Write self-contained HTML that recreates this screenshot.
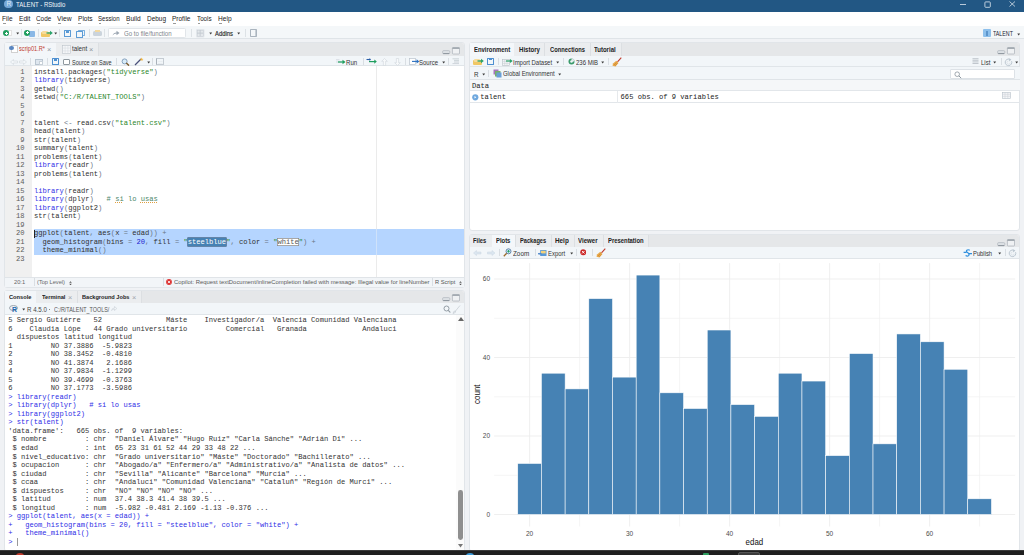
<!DOCTYPE html>
<html><head><meta charset="utf-8"><style>
*{box-sizing:border-box;margin:0;padding:0}
html,body{width:1024px;height:555px;overflow:hidden;background:#f0f2f5;font-family:"Liberation Sans",sans-serif;color:#222}
.a{position:absolute}
.t{position:absolute;white-space:pre;line-height:1;transform-origin:0 0}
.pane{position:absolute;background:#fff;border:1px solid #e1e5e9;border-radius:3px;overflow:hidden}
.tabs{position:absolute;left:0;top:0;right:0;background:#e5e7e9}
.ptb{position:absolute;left:0;right:0;background:#f2f6f9;border-bottom:0.8px solid #e0e5e9}
.mono{font-family:"Liberation Mono",monospace}
.ln{height:8.5px;line-height:8.5px;font-size:7.125px;white-space:pre}
.k{color:#2f2fe6}.s{color:#2a862a}.o{color:#6a7585}.n{color:#1d1dd0}.c{color:#4c886b}.p{color:#2e2ee6}
.c u{text-decoration:underline dotted #e0a040}
.sb{background:#4682b4;color:#fff;box-shadow:0 0 0 0.6px #2d4f6e}
.wh{display:inline-block;height:8.5px;vertical-align:top;background:#fff;color:#555;box-shadow:inset 0 0 0 0.7px #8a8a8a}
</style></head><body>
<div class="a" style="left:0px;top:0px;width:1024px;height:12px;background:#225784"></div>
<div class="a" style="left:4.1px;top:-0.3px;width:8.6px;height:8.6px;border-radius:50%;background:#75a8d8"></div>
<div class="t" style="left:6.5px;top:0.9px;font-size:6.6px;color:#dde9f5">R</div>
<div class="t" style="left:15.75px;top:0.59px;font-size:7.0px;color:#f2f6fa;transform:scaleX(0.862);">TALENT - RStudio</div>
<div class="a" style="left:960.4px;top:3.9px;width:5.8px;height:0.7px;background:#b9c9d9"></div>
<svg class="a" style="left:984px;top:1px" width="7" height="7" viewBox="0 0 7 7"><rect x="0.9" y="0.9" width="5.4" height="5.4" rx="0.8" fill="none" stroke="#eef3f8" stroke-width="0.75"/></svg>
<svg class="a" style="left:1009px;top:1px" width="6.5" height="6" viewBox="0 0 6.5 6"><path d="M0.5 0.5L6 5.5M6 0.5L0.5 5.5" stroke="#eef3f8" stroke-width="0.7"/></svg>
<div class="a" style="left:0px;top:12px;width:1024px;height:14px;background:#fff"></div>
<div class="t" style="left:2.44px;top:15.97px;font-size:7.1px;color:#222;transform:scaleX(0.921);">File</div>
<div class="a" style="left:3.0999999999999996px;top:22.6px;width:2.8px;height:0.5px;background:#999"></div>
<div class="t" style="left:18.64px;top:15.97px;font-size:7.1px;color:#222;transform:scaleX(0.935);">Edit</div>
<div class="a" style="left:19.3px;top:22.6px;width:2.8px;height:0.5px;background:#999"></div>
<div class="t" style="left:36.45px;top:15.97px;font-size:7.1px;color:#222;transform:scaleX(0.898);">Code</div>
<div class="a" style="left:37.099999999999994px;top:22.6px;width:2.8px;height:0.5px;background:#999"></div>
<div class="t" style="left:57.45px;top:15.97px;font-size:7.1px;color:#222;transform:scaleX(0.953);">View</div>
<div class="a" style="left:58.099999999999994px;top:22.6px;width:2.8px;height:0.5px;background:#999"></div>
<div class="t" style="left:77.64px;top:15.97px;font-size:7.1px;color:#222;transform:scaleX(0.928);">Plots</div>
<div class="a" style="left:78.3px;top:22.6px;width:2.8px;height:0.5px;background:#999"></div>
<div class="t" style="left:98.05px;top:15.97px;font-size:7.1px;color:#222;transform:scaleX(0.853);">Session</div>
<div class="a" style="left:98.7px;top:22.6px;width:2.8px;height:0.5px;background:#999"></div>
<div class="t" style="left:125.94px;top:15.97px;font-size:7.1px;color:#222;transform:scaleX(0.928);">Build</div>
<div class="a" style="left:126.6px;top:22.6px;width:2.8px;height:0.5px;background:#999"></div>
<div class="t" style="left:146.95px;top:15.97px;font-size:7.1px;color:#222;transform:scaleX(0.911);">Debug</div>
<div class="a" style="left:147.60000000000002px;top:22.6px;width:2.8px;height:0.5px;background:#999"></div>
<div class="t" style="left:172.34px;top:15.97px;font-size:7.1px;color:#222;transform:scaleX(0.917);">Profile</div>
<div class="a" style="left:173.0px;top:22.6px;width:2.8px;height:0.5px;background:#999"></div>
<div class="t" style="left:197.05px;top:15.97px;font-size:7.1px;color:#222;transform:scaleX(0.884);">Tools</div>
<div class="a" style="left:197.70000000000002px;top:22.6px;width:2.8px;height:0.5px;background:#999"></div>
<div class="t" style="left:218.45px;top:15.97px;font-size:7.1px;color:#222;transform:scaleX(0.928);">Help</div>
<div class="a" style="left:219.10000000000002px;top:22.6px;width:2.8px;height:0.5px;background:#999"></div>
<div class="a" style="left:0px;top:26px;width:1024px;height:12.5px;background:#f4f7f9;border-bottom:0.8px solid #dfe4e8"></div>
<div class="a" style="left:7.8px;top:30px;width:4px;height:5.5px;background:#fff;border:0.5px solid #e2e2e2"></div>
<div class="a" style="left:3px;top:30.3px;width:6.2px;height:6.2px;border-radius:50%;background:#1e9e5e"></div>
<div class="a" style="left:4.5px;top:33px;width:3.2px;height:0.9px;background:#fff"></div>
<div class="a" style="left:5.65px;top:31.85px;width:0.9px;height:3.2px;background:#fff"></div>
<svg class="a" style="left:16px;top:31.799999999999997px" width="4" height="3" viewBox="0 0 4 3"><path d="M0.3 0.6H3.1L1.7 2.4Z" fill="#3a3a3a"/></svg>
<div class="a" style="left:21px;top:29px;width:0.7px;height:8px;background:#dde2e6"></div>
<div class="a" style="left:28.5px;top:30.5px;width:6.5px;height:6.5px;background:#8ab8e6;border-radius:1px"></div>
<div class="a" style="left:24.3px;top:29.7px;width:6.2px;height:6.2px;border-radius:50%;background:#1e9e5e"></div>
<div class="a" style="left:25.8px;top:32.4px;width:3.2px;height:0.9px;background:#fff"></div>
<div class="a" style="left:26.95px;top:31.25px;width:0.9px;height:3.2px;background:#fff"></div>
<div class="a" style="left:37.5px;top:29px;width:0.7px;height:8px;background:#dde2e6"></div>
<div class="a" style="left:41px;top:32px;width:9px;height:4.5px;background:#f0c865;border-radius:1px"></div>
<div class="a" style="left:41.5px;top:30.5px;width:6px;height:3px;background:#f7dc9a;border-radius:1px"></div>
<svg class="a" style="left:46px;top:30px" width="7" height="5" viewBox="0 0 7 5"><path d="M0.5 3H4.5" stroke="#2aa36b" stroke-width="1.3"/><path d="M4 0.8L6.8 3L4 5.2Z" fill="#2aa36b"/></svg>
<svg class="a" style="left:54px;top:31.799999999999997px" width="4" height="3" viewBox="0 0 4 3"><path d="M0.3 0.6H3.1L1.7 2.4Z" fill="#3a3a3a"/></svg>
<div class="a" style="left:58.6px;top:29px;width:0.7px;height:8px;background:#dde2e6"></div>
<div class="a" style="left:64px;top:30px;width:7px;height:7px;border:1.3px solid #5b9bd5;border-radius:0.5px"></div>
<div class="a" style="left:66px;top:30px;width:3px;height:2.5px;background:#5b9bd5"></div>
<div class="a" style="left:78px;top:29.5px;width:6.5px;height:6.5px;border:1.2px solid #7ab0e0;border-radius:0.5px"></div>
<div class="a" style="left:76px;top:31px;width:6.5px;height:6.5px;border:1.2px solid #5b9bd5;border-radius:0.5px;background:#f4f7f9"></div>
<div class="a" style="left:88.5px;top:29px;width:0.7px;height:8px;background:#dde2e6"></div>
<div class="a" style="left:92.6px;top:31px;width:9px;height:5px;background:#cbd4dc;border-radius:1.5px"></div>
<div class="a" style="left:94.5px;top:29.5px;width:5px;height:2.5px;background:#f3d9a0"></div>
<div class="a" style="left:104.3px;top:29px;width:0.7px;height:8px;background:#dde2e6"></div>
<div class="a" style="left:108.4px;top:27.5px;width:78px;height:10px;background:#fff;border:0.7px solid #e1e5e9;border-radius:1.5px"></div>
<svg class="a" style="left:112px;top:30px" width="8" height="6" viewBox="0 0 8 6"><path d="M0.5 5.5 Q1.5 2.5 4.5 2.5 L4.5 0.8 L7.5 3 L4.5 5.2 L4.5 3.6 Q2 3.6 0.5 5.5Z" fill="#9aa5b1"/></svg>
<div class="t" style="left:123.67px;top:31.14px;font-size:6.6px;color:#80868c;transform:scaleX(0.927);">Go to file/function</div>
<div class="a" style="left:190.5px;top:29px;width:0.7px;height:8px;background:#dde2e6"></div>
<svg class="a" style="left:196px;top:29px" width="8.5" height="8.5" viewBox="0 0 8.5 8.5"><rect x="0" y="0" width="8.5" height="8.5" rx="1" fill="#e4e8ec"/><rect x="1.2" y="1.2" width="2.7" height="2.7" fill="none" stroke="#c3cad1" stroke-width="0.5"/><rect x="4.6" y="1.2" width="2.7" height="2.7" fill="none" stroke="#c3cad1" stroke-width="0.5"/><rect x="1.2" y="4.6" width="2.7" height="2.7" fill="none" stroke="#c3cad1" stroke-width="0.5"/><rect x="4.6" y="4.6" width="2.7" height="2.7" fill="none" stroke="#c3cad1" stroke-width="0.5"/></svg>
<svg class="a" style="left:208.5px;top:31.799999999999997px" width="4" height="3" viewBox="0 0 4 3"><path d="M0.3 0.6H3.1L1.7 2.4Z" fill="#3a3a3a"/></svg>
<div class="t" style="left:215.37px;top:31.34px;font-size:6.6px;color:#2a2a2a;transform:scaleX(0.887);-webkit-text-stroke:0.15px #2a2a2a">Addins</div>
<svg class="a" style="left:237px;top:31.799999999999997px" width="4" height="3" viewBox="0 0 4 3"><path d="M0.3 0.6H3.1L1.7 2.4Z" fill="#3a3a3a"/></svg>
<div class="a" style="left:245px;top:29px;width:0.7px;height:8px;background:#dde2e6"></div>
<div class="a" style="left:249.5px;top:29.3px;width:7px;height:8px;border:0.7px solid #aab4be;border-radius:0.8px;background:linear-gradient(#aab4be,#aab4be) 4px 0/0.6px 100% no-repeat"></div>
<div class="a" style="left:983px;top:29.3px;width:8px;height:7.5px;background:#8dc0ec;border-radius:1px"></div>
<div class="a" style="left:986px;top:30.5px;width:2px;height:5px;background:#5c95cc"></div>
<div class="t" style="left:993.38px;top:31.05px;font-size:6.5px;color:#223;transform:scaleX(0.813);">TALENT</div>
<svg class="a" style="left:1016.5px;top:32.8px" width="4" height="3" viewBox="0 0 4 3"><path d="M0.3 0.6H3.1L1.7 2.4Z" fill="#3a3a3a"/></svg>
<div class="pane" style="left:4px;top:42px;width:461px;height:246px"><div class="tabs" style="height:12.8px"></div><div class="ptb" style="top:12.8px;height:10.5px"></div></div>
<div class="a" style="left:56px;top:43.3px;width:43px;height:12.5px;background:#ebedef;border-right:0.7px solid #dcdfe2"></div>
<div class="a" style="left:5px;top:43px;width:51px;height:13px;background:#f3f6f9"></div>
<div class="a" style="left:10.5px;top:45px;width:7px;height:7.6px;background:#fff;border:0.6px solid #d0d0d0"></div>
<div class="a" style="left:9.4px;top:45.5px;width:4.5px;height:4.3px;border-radius:50%;background:#5a86c0"></div>
<div class="t" style="left:19.28px;top:46.45px;font-size:6.5px;color:#c0392b;transform:scaleX(0.867);">scrip01.R*</div>
<div class="t" style="left:47.12px;top:45.91px;font-size:7.6px;color:#8d9399;transform:scaleX(0.965);">×</div>
<svg class="a" style="left:61.7px;top:45px" width="9" height="9" viewBox="0 0 9 9"><rect x="0.4" y="0.4" width="8.2" height="8.2" fill="#f5f7f9" stroke="#bcc3ca" stroke-width="0.6"/><path d="M0.4 3.1H8.6M0.4 5.9H8.6M3.1 0.4V8.6M5.9 0.4V8.6" stroke="#d3d8dd" stroke-width="0.5"/></svg>
<div class="t" style="left:71.58px;top:46.45px;font-size:6.5px;color:#333;transform:scaleX(0.955);">talent</div>
<div class="t" style="left:88.62px;top:45.91px;font-size:7.6px;color:#8d9399;transform:scaleX(0.965);">×</div>
<svg class="a" style="left:442px;top:46.5px" width="18" height="8" viewBox="0 0 18 8"><rect x="0.6" y="3.6" width="7.2" height="3.2" rx="1.1" fill="#dde1e5" stroke="#a7afb7" stroke-width="0.6"/><path d="M1.2 6.5H7.2" stroke="#8a939b" stroke-width="0.9"/><rect x="10.4" y="0.6" width="7.1" height="6.4" rx="0.8" fill="#eff1f3" stroke="#9ea6ae" stroke-width="0.6"/><rect x="10.4" y="0.5" width="7.1" height="1.3" fill="#939ba3"/></svg>
<svg class="a" style="left:9.5px;top:59px" width="17" height="6" viewBox="0 0 17 6"><path d="M0.5 3L3.5 0.5V2H7.5V4H3.5V5.5Z M16.5 3L13.5 0.5V2H9.5V4H13.5V5.5Z" fill="#f4f7fa" stroke="#d0d6dc" stroke-width="0.6"/></svg>
<div class="a" style="left:30.2px;top:57.5px;width:0.7px;height:7px;background:#d9dee3"></div>
<div class="a" style="left:35px;top:58.5px;width:7.5px;height:6px;background:#dfe7ef;border:0.6px solid #b8c4d0"></div>
<div class="a" style="left:38.5px;top:60.5px;width:4px;height:4px;background:#fff;border:0.5px solid #c7d0d8"></div>
<div class="a" style="left:47.3px;top:57.5px;width:0.7px;height:7px;background:#d9dee3"></div>
<div class="a" style="left:52.2px;top:58.3px;width:6.8px;height:6.8px;border:1.3px solid #4d8fd1;border-radius:0.6px"></div>
<div class="a" style="left:54px;top:58.3px;width:3.2px;height:2.3px;background:#4d8fd1"></div>
<div class="a" style="left:63.3px;top:59.2px;width:6.6px;height:6.2px;background:#fff;border:0.6px solid #8f989f;border-radius:1px"></div>
<div class="t" style="left:71.67px;top:59.64px;font-size:6.6px;color:#333;transform:scaleX(0.844);">Source on Save</div>
<div class="a" style="left:116px;top:57.5px;width:0.7px;height:7px;background:#d9dee3"></div>
<svg class="a" style="left:121px;top:57.5px" width="9" height="8" viewBox="0 0 9 8"><circle cx="3.6" cy="3.4" r="2.5" fill="#d8ecf8" stroke="#7c98b8" stroke-width="0.9"/><path d="M5.3 5.1L8 7.6" stroke="#7a5a2a" stroke-width="1.4"/></svg>
<svg class="a" style="left:134px;top:57px" width="10" height="9" viewBox="0 0 10 9"><path d="M1 8L7 2" stroke="#4a4f7a" stroke-width="1.3"/><path d="M7.5 0.5L8 1.8L9.5 2L8.3 2.8L8.6 4L7.5 3.2L6.5 4L6.8 2.8L5.6 2L7 1.8Z" fill="#f0b43c"/></svg>
<svg class="a" style="left:146.5px;top:60.5px" width="4" height="3" viewBox="0 0 4 3"><path d="M0.3 0.6H3.1L1.7 2.4Z" fill="#3a3a3a"/></svg>
<div class="a" style="left:152px;top:57.5px;width:0.7px;height:7px;background:#d9dee3"></div>
<div class="a" style="left:156.4px;top:58.2px;width:7.2px;height:6.4px;border:0.6px solid #c5ccd3;border-left:1.3px solid #a9b1b9;background:linear-gradient(#dfe5ea,#dfe5ea) 1px 2px/4.5px 0.5px no-repeat,linear-gradient(#dfe5ea,#dfe5ea) 1px 4px/4.5px 0.5px no-repeat"></div>
<svg class="a" style="left:336px;top:58.5px" width="10" height="6" viewBox="0 0 10 6"><path d="M0 0.8H3.5M0 3H6" stroke="#c8d0d8" stroke-width="0.7"/><path d="M2 3H7" stroke="#1e9e5e" stroke-width="1.2"/><path d="M6.5 0.8L9.5 3L6.5 5.2Z" fill="#1e9e5e"/></svg>
<div class="t" style="left:345.97px;top:59.64px;font-size:6.6px;color:#333;transform:scaleX(0.924);">Run</div>
<div class="a" style="left:362.5px;top:57.5px;width:0.7px;height:7px;background:#d9dee3"></div>
<svg class="a" style="left:366px;top:58px" width="11" height="6" viewBox="0 0 11 6"><path d="M0.5 1.5H4" stroke="#2a5fa8" stroke-width="1.1"/><path d="M3.5 0L5 1.5L3.5 3Z" fill="#2a5fa8"/><path d="M3 3.6H9" stroke="#1e9e5e" stroke-width="1.2"/><path d="M8.3 1.5L10.8 3.6L8.3 5.7Z" fill="#1e9e5e"/></svg>
<svg class="a" style="left:380.5px;top:57.8px" width="7" height="8" viewBox="0 0 7 8"><path d="M3.5 0.5L6.3 3.3H4.6V7.5H2.4V3.3H0.7Z" fill="#f8fafb" stroke="#cfd5db" stroke-width="0.6"/></svg>
<svg class="a" style="left:393.5px;top:57.8px" width="7" height="8" viewBox="0 0 7 8"><path d="M3.5 7.5L6.3 4.7H4.6V0.5H2.4V4.7H0.7Z" fill="#f8fafb" stroke="#cfd5db" stroke-width="0.6"/></svg>
<div class="a" style="left:404.7px;top:57.5px;width:0.7px;height:7px;background:#d9dee3"></div>
<svg class="a" style="left:408.5px;top:58px" width="11" height="7" viewBox="0 0 11 7"><rect x="0.4" y="0.4" width="6" height="6" fill="#fff" stroke="#b9c3cc" stroke-width="0.7"/><path d="M3 3.4H8" stroke="#2a6fc0" stroke-width="1.1"/><path d="M7.6 1.3L10.3 3.4L7.6 5.5Z" fill="#2a6fc0"/></svg>
<div class="t" style="left:418.67px;top:59.64px;font-size:6.6px;color:#333;transform:scaleX(0.913);">Source</div>
<svg class="a" style="left:441.8px;top:60.5px" width="4" height="3" viewBox="0 0 4 3"><path d="M0.3 0.6H3.1L1.7 2.4Z" fill="#3a3a3a"/></svg>
<div class="a" style="left:447.5px;top:57.5px;width:0.7px;height:7px;background:#d9dee3"></div>
<svg class="a" style="left:452px;top:58px" width="8" height="7" viewBox="0 0 8 7"><path d="M0.5 0.8H7M2 2.4H7M2 4H7M0.5 5.6H7" stroke="#c3cad1" stroke-width="0.8"/></svg>
<div class="a" style="left:5px;top:66.3px;width:26.5px;height:210.7px;background:#f0f0f0"></div>
<div class="a" style="left:376.0px;top:66.3px;width:0.8px;height:210.7px;background:#ebebeb"></div>
<div class="a" style="left:34px;top:229.3px;width:430px;height:25.5px;background:#b5d5ff"></div>
<div class="a" style="left:376.0px;top:229.3px;width:0.8px;height:25.5px;background:#cfe2fa"></div>
<div class="a" style="left:33.6px;top:230px;width:1px;height:7.5px;background:#222"></div>
<div class="a mono" style="left:4.5px;top:67.8px;width:20px;text-align:right;color:#5c5c5c"><div class="ln">1</div><div class="ln">2</div><div class="ln">3</div><div class="ln">4</div><div class="ln">5</div><div class="ln">6</div><div class="ln">7</div><div class="ln">8</div><div class="ln">9</div><div class="ln">10</div><div class="ln">11</div><div class="ln">12</div><div class="ln">13</div><div class="ln">14</div><div class="ln">15</div><div class="ln">16</div><div class="ln">17</div><div class="ln">18</div><div class="ln">19</div><div class="ln">20</div><div class="ln">21</div><div class="ln">22</div><div class="ln">23</div></div>
<div class="a mono" style="left:34px;top:67.8px;color:#303030"><div class="ln">install.packages<span class="o">(</span><span class="s">"tidyverse"</span><span class="o">)</span></div><div class="ln"><span class="k">library</span><span class="o">(</span>tidyverse<span class="o">)</span></div><div class="ln">getwd<span class="o">()</span></div><div class="ln">setwd<span class="o">(</span><span class="s">"C:/R/TALENT_TOOLS"</span><span class="o">)</span></div><div class="ln"></div><div class="ln"></div><div class="ln">talent <span class="o">&lt;-</span> read.csv<span class="o">(</span><span class="s">"talent.csv"</span><span class="o">)</span></div><div class="ln">head<span class="o">(</span>talent<span class="o">)</span></div><div class="ln">str<span class="o">(</span>talent<span class="o">)</span></div><div class="ln">summary<span class="o">(</span>talent<span class="o">)</span></div><div class="ln">problems<span class="o">(</span>talent<span class="o">)</span></div><div class="ln"><span class="k">library</span><span class="o">(</span>readr<span class="o">)</span></div><div class="ln">problems<span class="o">(</span>talent<span class="o">)</span></div><div class="ln"></div><div class="ln"><span class="k">library</span><span class="o">(</span>readr<span class="o">)</span></div><div class="ln"><span class="k">library</span><span class="o">(</span>dplyr<span class="o">)</span>   <span class="c"># <u>si</u> lo <u>usas</u></span></div><div class="ln"><span class="k">library</span><span class="o">(</span>ggplot2<span class="o">)</span></div><div class="ln">str<span class="o">(</span>talent<span class="o">)</span></div><div class="ln"></div><div class="ln">ggplot<span class="o">(</span>talent<span class="o">,</span> aes<span class="o">(</span>x <span class="o">=</span> edad<span class="o">))</span> <span class="o">+</span></div><div class="ln">  geom_histogram<span class="o">(</span>bins <span class="o">=</span> <span class="n">20</span><span class="o">,</span> fill <span class="o">=</span> <span class="s">"</span><span class="sb">steelblue</span><span class="s">"</span><span class="o">,</span> color <span class="o">=</span> <span class="s">"</span><span class="wh">white</span><span class="s">"</span><span class="o">)</span> <span class="o">+</span></div><div class="ln">  theme_minimal<span class="o">()</span></div><div class="ln"></div></div>
<div class="a" style="left:5px;top:277px;width:459px;height:10px;background:#f2f5f8;border-top:0.7px solid #e0e4e8"></div>
<div class="t" style="left:13.99px;top:279.29px;font-size:6.2px;color:#666;transform:scaleX(0.926);">20:1</div>
<div class="a" style="left:34.4px;top:277.5px;width:0.7px;height:8.5px;background:#d9dee3"></div>
<div class="t" style="left:37.49px;top:279.29px;font-size:6.2px;color:#666;transform:scaleX(0.913);">(Top Level)</div>
<svg class="a" style="left:68.6px;top:280.6px" width="3" height="4.6" viewBox="0 0 3 4.6"><path d="M0.2 1.8H2.8L1.5 0.2Z M0.2 2.8H2.8L1.5 4.4Z" fill="#555"/></svg>
<div class="a" style="left:163.3px;top:277.5px;width:0.7px;height:8.5px;background:#d9dee3"></div>
<svg class="a" style="left:166.3px;top:279px" width="6" height="6" viewBox="0 0 6 6"><circle cx="3" cy="3" r="2.9" fill="#d33"/><path d="M1.8 1.8L4.2 4.2M4.2 1.8L1.8 4.2" stroke="#fff" stroke-width="0.8"/></svg>
<div class="t" style="left:174.29px;top:279.29px;font-size:6.2px;color:#5a5a5a;transform:scaleX(0.955);">Copilot: Request textDocument/inlineCompletion failed with message: Illegal value for lineNumber</div>
<div class="a" style="left:432.3px;top:277.5px;width:0.7px;height:8.5px;background:#d9dee3"></div>
<div class="t" style="left:435.49px;top:279.29px;font-size:6.2px;color:#555;transform:scaleX(0.920);">R Script</div>
<svg class="a" style="left:458.5px;top:280.6px" width="3" height="4.6" viewBox="0 0 3 4.6"><path d="M0.2 1.8H2.8L1.5 0.2Z M0.2 2.8H2.8L1.5 4.4Z" fill="#555"/></svg>
<div class="pane" style="left:4px;top:290px;width:461px;height:262px"><div class="tabs" style="height:12.1px"></div><div class="ptb" style="top:12.1px;height:11.8px"></div></div>
<div class="a" style="left:36.25px;top:291.3px;width:105.2px;height:11.8px;background:#ebedef"></div>
<div class="a" style="left:77.3px;top:291.3px;width:0.7px;height:11.8px;background:#dcdfe2"></div>
<div class="a" style="left:141.4px;top:291.3px;width:0.7px;height:11.8px;background:#dcdfe2"></div>
<div class="a" style="left:5px;top:291px;width:31.25px;height:12.3px;background:#f3f6f9"></div>
<div class="t" style="left:9.09px;top:294.29px;font-size:6.2px;color:#222;font-weight:bold;transform:scaleX(0.920);">Console</div>
<div class="t" style="left:41.59px;top:294.29px;font-size:6.2px;color:#222;font-weight:bold;transform:scaleX(0.926);">Terminal</div>
<div class="t" style="left:68.22px;top:293.61px;font-size:7.6px;color:#9da3a9;transform:scaleX(0.965);">×</div>
<div class="t" style="left:82.49px;top:294.29px;font-size:6.2px;color:#222;font-weight:bold;transform:scaleX(0.908);">Background Jobs</div>
<div class="t" style="left:132.22px;top:293.61px;font-size:7.6px;color:#9da3a9;transform:scaleX(0.965);">×</div>
<svg class="a" style="left:442px;top:294.2px" width="18" height="8" viewBox="0 0 18 8"><rect x="0.6" y="3.6" width="7.2" height="3.2" rx="1.1" fill="#dde1e5" stroke="#a7afb7" stroke-width="0.6"/><path d="M1.2 6.5H7.2" stroke="#8a939b" stroke-width="0.9"/><rect x="10.4" y="0.6" width="7.1" height="6.4" rx="0.8" fill="#eff1f3" stroke="#9ea6ae" stroke-width="0.6"/><rect x="10.4" y="0.5" width="7.1" height="1.3" fill="#939ba3"/></svg>
<svg class="a" style="left:9px;top:304.5px" width="10" height="8" viewBox="0 0 10 8"><ellipse cx="4.5" cy="3" rx="4" ry="2.5" fill="none" stroke="#9aa3ab" stroke-width="1"/><text x="3.0" y="7.4" font-family="Liberation Sans" font-weight="bold" font-size="6.8" fill="#2166b0">R</text></svg>
<svg class="a" style="left:21.9px;top:307.8px" width="4" height="3" viewBox="0 0 4 3"><path d="M0.3 0.6H3.1L1.7 2.4Z" fill="#3a3a3a"/></svg>
<div class="t" style="left:26.57px;top:306.84px;font-size:6.6px;color:#444;transform:scaleX(0.931);">R 4.5.0</div>
<div class="a" style="left:49.3px;top:308.8px;width:1px;height:1px;background:#888"></div>
<div class="t" style="left:53.57px;top:306.84px;font-size:6.6px;color:#555;transform:scaleX(0.819);">C:/R/TALENT_TOOLS/</div>
<svg class="a" style="left:111px;top:305.5px" width="6" height="5" viewBox="0 0 6 5"><path d="M0.5 4.5Q1 2 3.5 2V0.5L5.8 2.5L3.5 4.5V3Q2 3 0.5 4.5Z" fill="none" stroke="#c9d0d6" stroke-width="0.6"/></svg>
<svg class="a" style="left:443px;top:305px" width="18" height="9" viewBox="0 0 18 9"><circle cx="3.5" cy="3.5" r="2.5" fill="none" stroke="#8a949d" stroke-width="0.9"/><path d="M5.3 5.3L7.3 7.5" stroke="#8a949d" stroke-width="1.1"/><path d="M17 0.5L12.5 6M10 8.5Q10.5 5.5 12.5 6Q13.5 7.5 10 8.5Z" fill="none" stroke="#c3cad1" stroke-width="0.7"/></svg>
<div class="a" style="left:456px;top:315px;width:8px;height:235px;background:#fbfbfb"></div>
<svg class="a" style="left:457.5px;top:316.8px" width="6" height="4" viewBox="0 0 6 4"><path d="M0 4H6L3 0Z" fill="#666"/></svg>
<div class="a" style="left:458px;top:489.5px;width:4.8px;height:50px;background:#8f8f8f;border-radius:2.4px"></div>
<svg class="a" style="left:458px;top:544px" width="5" height="3.5" viewBox="0 0 5 3.5"><path d="M0 0H5L2.5 3.5Z" fill="#777"/></svg>
<div class="a mono" style="left:8.2px;top:316px;color:#333"><div class="ln" style="height:8.545px">5 Sergio Gutiérre   52               Máste    Investigador/a  Valencia Comunidad Valenciana</div><div class="ln" style="height:8.545px">6    Claudia Lópe   44 Grado universitario         Comercial   Granada             Andaluci</div><div class="ln" style="height:8.545px">  dispuestos latitud longitud</div><div class="ln" style="height:8.545px">1         NO 37.3886  -5.9823</div><div class="ln" style="height:8.545px">2         NO 38.3452  -0.4810</div><div class="ln" style="height:8.545px">3         NO 41.3874   2.1686</div><div class="ln" style="height:8.545px">4         NO 37.9834  -1.1299</div><div class="ln" style="height:8.545px">5         NO 39.4699  -0.3763</div><div class="ln" style="height:8.545px">6         NO 37.1773  -3.5986</div><div class="ln" style="height:8.545px"><span class="p">&gt; library(readr)</span></div><div class="ln" style="height:8.545px"><span class="p">&gt; library(dplyr)   # si lo usas</span></div><div class="ln" style="height:8.545px"><span class="p">&gt; library(ggplot2)</span></div><div class="ln" style="height:8.545px"><span class="p">&gt; str(talent)</span></div><div class="ln" style="height:8.545px">'data.frame':   665 obs. of  9 variables:</div><div class="ln" style="height:8.545px"> $ nombre         : chr  "Daniel Álvare" "Hugo Ruiz" "Carla Sánche" "Adrián Di" ...</div><div class="ln" style="height:8.545px"> $ edad           : int  65 23 31 61 52 44 29 33 48 22 ...</div><div class="ln" style="height:8.545px"> $ nivel_educativo: chr  "Grado universitario" "Máste" "Doctorado" "Bachillerato" ...</div><div class="ln" style="height:8.545px"> $ ocupacion      : chr  "Abogado/a" "Enfermero/a" "Administrativo/a" "Analista de datos" ...</div><div class="ln" style="height:8.545px"> $ ciudad         : chr  "Sevilla" "Alicante" "Barcelona" "Murcia" ...</div><div class="ln" style="height:8.545px"> $ ccaa           : chr  "Andaluci" "Comunidad Valenciana" "Cataluñ" "Región de Murci" ...</div><div class="ln" style="height:8.545px"> $ dispuestos     : chr  "NO" "NO" "NO" "NO" ...</div><div class="ln" style="height:8.545px"> $ latitud        : num  37.4 38.3 41.4 38 39.5 ...</div><div class="ln" style="height:8.545px"> $ longitud       : num  -5.982 -0.481 2.169 -1.13 -0.376 ...</div><div class="ln" style="height:8.545px"><span class="p">&gt; ggplot(talent, aes(x = edad)) +</span></div><div class="ln" style="height:8.545px"><span class="p">+   geom_histogram(bins = 20, fill = "steelblue", color = "white") +</span></div><div class="ln" style="height:8.545px"><span class="p">+   theme_minimal()</span></div><div class="ln" style="height:8.545px"><span class="p">&gt; </span></div></div>
<div class="a" style="left:16.6px;top:537.5px;width:0.8px;height:8px;background:#999"></div>
<div class="pane" style="left:469px;top:42px;width:551px;height:189px"><div class="tabs" style="height:12.8px"></div><div class="ptb" style="top:12.8px;height:11.4px"></div></div>
<div class="a" style="left:513.9px;top:43px;width:106.7px;height:12.6px;background:#ebedef"></div>
<div class="a" style="left:544.2px;top:43px;width:0.7px;height:12.6px;background:#dcdfe2"></div>
<div class="a" style="left:589.6px;top:43px;width:0.7px;height:12.6px;background:#dcdfe2"></div>
<div class="a" style="left:620.6px;top:43px;width:0.7px;height:12.6px;background:#dcdfe2"></div>
<div class="a" style="left:470px;top:43px;width:43.9px;height:12.6px;background:#f4f7fa"></div>
<div class="t" style="left:473.88px;top:47.06px;font-size:6.4px;color:#222;font-weight:bold;transform:scaleX(0.926);">Environment</div>
<div class="t" style="left:519.28px;top:47.06px;font-size:6.4px;color:#222;font-weight:bold;transform:scaleX(0.952);">History</div>
<div class="t" style="left:549.58px;top:47.06px;font-size:6.4px;color:#222;font-weight:bold;transform:scaleX(0.904);">Connections</div>
<div class="t" style="left:593.88px;top:47.06px;font-size:6.4px;color:#222;font-weight:bold;transform:scaleX(0.944);">Tutorial</div>
<svg class="a" style="left:996.8px;top:46.5px" width="18" height="8" viewBox="0 0 18 8"><rect x="0.6" y="3.6" width="7.2" height="3.2" rx="1.1" fill="#dde1e5" stroke="#a7afb7" stroke-width="0.6"/><path d="M1.2 6.5H7.2" stroke="#8a939b" stroke-width="0.9"/><rect x="10.4" y="0.6" width="7.1" height="6.4" rx="0.8" fill="#eff1f3" stroke="#9ea6ae" stroke-width="0.6"/><rect x="10.4" y="0.5" width="7.1" height="1.3" fill="#939ba3"/></svg>
<div class="a" style="left:473px;top:60px;width:8.5px;height:4.5px;background:#f0c865;border-radius:1px"></div>
<div class="a" style="left:473.5px;top:58.5px;width:6px;height:3px;background:#f6dc9c;border-radius:1px"></div>
<svg class="a" style="left:477px;top:57.5px" width="7" height="5" viewBox="0 0 7 5"><path d="M0.5 3H4.5" stroke="#2aa36b" stroke-width="1.3"/><path d="M4 0.8L6.8 3L4 5.2Z" fill="#2aa36b"/></svg>
<div class="a" style="left:486.8px;top:58px;width:6.8px;height:6.8px;border:1.3px solid #4d8fd1;border-radius:0.6px"></div>
<div class="a" style="left:488.6px;top:58px;width:3.2px;height:2.3px;background:#4d8fd1"></div>
<div class="a" style="left:498.3px;top:57.5px;width:0.7px;height:7px;background:#d9dee3"></div>
<svg class="a" style="left:501.5px;top:57.5px" width="11" height="8" viewBox="0 0 11 8"><rect x="0.4" y="1.4" width="7" height="6" fill="#f3f5f7" stroke="#b6bec6" stroke-width="0.6"/><path d="M0.4 3.4H7.4M0.4 5.4H7.4M2.7 1.4V7.4M5 1.4V7.4" stroke="#c6ccd2" stroke-width="0.5"/><path d="M4 3H8.5" stroke="#2aa36b" stroke-width="1.2"/><path d="M8 1L10.7 3L8 5Z" fill="#2aa36b"/></svg>
<div class="t" style="left:513.37px;top:59.64px;font-size:6.6px;color:#333;transform:scaleX(0.904);">Import Dataset</div>
<svg class="a" style="left:555.8px;top:60.7px" width="4" height="3" viewBox="0 0 4 3"><path d="M0.3 0.6H3.1L1.7 2.4Z" fill="#3a3a3a"/></svg>
<div class="a" style="left:562.5px;top:57.5px;width:0.7px;height:7px;background:#d9dee3"></div>
<svg class="a" style="left:568px;top:58px" width="7" height="7" viewBox="0 0 7 7"><circle cx="3.5" cy="3.5" r="3" fill="#3a9a6a"/><path d="M3.5 3.5V0.5A3 3 0 0 1 6.5 3.5Z" fill="#dfe5ea"/><circle cx="3.5" cy="3.5" r="1.3" fill="#f2f6f9"/></svg>
<div class="t" style="left:575.97px;top:59.64px;font-size:6.6px;color:#333;transform:scaleX(0.909);">236 MiB</div>
<svg class="a" style="left:601.2px;top:60.7px" width="4" height="3" viewBox="0 0 4 3"><path d="M0.3 0.6H3.1L1.7 2.4Z" fill="#3a3a3a"/></svg>
<div class="a" style="left:608.4px;top:57.5px;width:0.7px;height:7px;background:#d9dee3"></div>
<svg class="a" style="left:611.5px;top:56.5px" width="10" height="10" viewBox="0 0 10 10"><path d="M9.3 0.7L5.5 4.8" stroke="#c0392b" stroke-width="1.1"/><path d="M4.3 3.8L6.5 6L3.5 9.5L0.5 8.8L1 6.5Z" fill="#e8a84a"/><path d="M2 8L4.5 5.5M3.2 8.8L5.3 6.3" stroke="#c07a2a" stroke-width="0.5"/></svg>
<svg class="a" style="left:971.5px;top:58.3px" width="7" height="6" viewBox="0 0 7 6"><path d="M0.5 0.7H6.5M0.5 2.3H6.5M0.5 3.9H6.5M0.5 5.5H6.5" stroke="#aab2ba" stroke-width="0.7"/></svg>
<div class="t" style="left:980.67px;top:59.64px;font-size:6.6px;color:#333;transform:scaleX(0.905);">List</div>
<svg class="a" style="left:993px;top:60.7px" width="4" height="3" viewBox="0 0 4 3"><path d="M0.3 0.6H3.1L1.7 2.4Z" fill="#3a3a3a"/></svg>
<div class="a" style="left:1000.8px;top:57.5px;width:0.7px;height:7px;background:#d9dee3"></div>
<svg class="a" style="left:1003.8px;top:57.5px" width="9" height="9" viewBox="0 0 9 9"><path d="M7.6 3.2A3.3 3.3 0 1 1 5.8 1.3" fill="none" stroke="#bcc7d1" stroke-width="1"/><path d="M4.6 0.2L7.4 1.2L5.4 3.4Z" fill="#bcc7d1"/><path d="M4.5 3A1.6 1.6 0 1 0 6.1 4.6" fill="none" stroke="#d5dde4" stroke-width="0.7"/></svg>
<svg class="a" style="left:1015px;top:60.7px" width="4" height="3" viewBox="0 0 4 3"><path d="M0.3 0.6H3.1L1.7 2.4Z" fill="#3a3a3a"/></svg>
<div class="a" style="left:470px;top:67px;width:550px;height:13.2px;background:#f2f6f9;border-bottom:0.7px solid #dfe4e8"></div>
<div class="t" style="left:473.85px;top:71.39px;font-size:7px;color:#333;transform:scaleX(0.895);">R</div>
<svg class="a" style="left:481.5px;top:73.0px" width="4" height="3" viewBox="0 0 4 3"><path d="M0.3 0.6H3.1L1.7 2.4Z" fill="#3a3a3a"/></svg>
<div class="a" style="left:488px;top:69.5px;width:0.7px;height:7px;background:#d9dee3"></div>
<svg class="a" style="left:492.5px;top:69px" width="9" height="9" viewBox="0 0 9 9"><rect x="0.5" y="0.5" width="5" height="5" fill="#a774c0"/><rect x="2" y="2" width="5.5" height="5.5" fill="#77b06b"/><rect x="3.5" y="3.5" width="5" height="5" fill="#6b9fd8"/></svg>
<div class="t" style="left:502.57px;top:71.24px;font-size:6.6px;color:#333;transform:scaleX(0.892);">Global Environment</div>
<svg class="a" style="left:557.6px;top:73.0px" width="4" height="3" viewBox="0 0 4 3"><path d="M0.3 0.6H3.1L1.7 2.4Z" fill="#3a3a3a"/></svg>
<div class="a" style="left:950.3px;top:69.4px;width:64.7px;height:9.4px;background:#fff;border:0.7px solid #dde2e7;border-radius:1px"></div>
<svg class="a" style="left:953.5px;top:70.5px" width="8" height="8" viewBox="0 0 8 8"><circle cx="3.2" cy="3.2" r="2.3" fill="none" stroke="#8a949d" stroke-width="0.8"/><path d="M4.8 4.8L7.2 7.2" stroke="#8a949d" stroke-width="1"/></svg>
<div class="a" style="left:470px;top:80.2px;width:549.5px;height:10.8px;background:#f5f7f9;border-bottom:0.7px solid #e2e6ea"></div>
<div class="a mono" style="left:471.9px;top:81.5px;color:#222"><div class="ln">Data</div></div>
<div class="a" style="left:470px;top:91px;width:549.5px;height:12px;background:#fff;border-bottom:0.7px solid #e2e6ea;border-right:0.7px solid #e2e6ea"></div>
<div class="a" style="left:617.2px;top:91px;width:0.7px;height:11.5px;background:#e6e9ec"></div>
<svg class="a" style="left:471.6px;top:93.6px" width="7" height="7" viewBox="0 0 7 7"><circle cx="3.3" cy="3.3" r="3.1" fill="#6fa8de"/><path d="M2.5 2L4.3 3.3L2.5 4.6Z" fill="#fff"/></svg>
<div class="a mono" style="left:480.3px;top:93.2px;color:#222"><div class="ln">talent</div></div>
<div class="a mono" style="left:620.6px;top:93.2px;color:#222"><div class="ln">665 obs. of 9 variables</div></div>
<svg class="a" style="left:1001.5px;top:92.3px" width="9" height="7" viewBox="0 0 9 7"><rect x="0.4" y="0.4" width="8.2" height="6.2" fill="#f4f6f8" stroke="#b8c0c8" stroke-width="0.6"/><path d="M0.4 2.3H8.6M0.4 4.3H8.6M3 0.4V6.6M5.8 0.4V6.6" stroke="#c8ced4" stroke-width="0.5"/></svg>
<div class="pane" style="left:469px;top:234px;width:551px;height:318px"><div class="tabs" style="height:11.8px"></div><div class="ptb" style="top:11.8px;height:12.4px"></div></div>
<div class="a" style="left:470px;top:235px;width:177.5px;height:12px;background:#ebedef"></div>
<div class="a" style="left:491.6px;top:235px;width:0.7px;height:12px;background:#dcdfe2"></div>
<div class="a" style="left:515px;top:235px;width:0.7px;height:12px;background:#dcdfe2"></div>
<div class="a" style="left:550.8px;top:235px;width:0.7px;height:12px;background:#dcdfe2"></div>
<div class="a" style="left:573.7px;top:235px;width:0.7px;height:12px;background:#dcdfe2"></div>
<div class="a" style="left:603px;top:235px;width:0.7px;height:12px;background:#dcdfe2"></div>
<div class="a" style="left:647.5px;top:235px;width:0.7px;height:12px;background:#dcdfe2"></div>
<div class="a" style="left:492px;top:235px;width:23px;height:12px;background:#f4f7fa"></div>
<div class="t" style="left:473.48px;top:238.36px;font-size:6.4px;color:#222;font-weight:bold;transform:scaleX(0.904);">Files</div>
<div class="t" style="left:496.28px;top:238.36px;font-size:6.4px;color:#222;font-weight:bold;transform:scaleX(0.920);">Plots</div>
<div class="t" style="left:519.68px;top:238.36px;font-size:6.4px;color:#222;font-weight:bold;transform:scaleX(0.887);">Packages</div>
<div class="t" style="left:555.48px;top:238.36px;font-size:6.4px;color:#222;font-weight:bold;transform:scaleX(0.994);">Help</div>
<div class="t" style="left:578.38px;top:238.36px;font-size:6.4px;color:#222;font-weight:bold;transform:scaleX(0.955);">Viewer</div>
<div class="t" style="left:607.68px;top:238.36px;font-size:6.4px;color:#222;font-weight:bold;transform:scaleX(0.921);">Presentation</div>
<svg class="a" style="left:996.7px;top:238.5px" width="18" height="8" viewBox="0 0 18 8"><rect x="0.6" y="3.6" width="7.2" height="3.2" rx="1.1" fill="#dde1e5" stroke="#a7afb7" stroke-width="0.6"/><path d="M1.2 6.5H7.2" stroke="#8a939b" stroke-width="0.9"/><rect x="10.4" y="0.6" width="7.1" height="6.4" rx="0.8" fill="#eff1f3" stroke="#9ea6ae" stroke-width="0.6"/><rect x="10.4" y="0.5" width="7.1" height="1.3" fill="#939ba3"/></svg>
<svg class="a" style="left:473px;top:249.5px" width="23" height="6" viewBox="0 0 23 6"><path d="M0.5 3L3.5 0.5V2H8V4H3.5V5.5Z M22 3L19 0.5V2H14.5V4H19V5.5Z" fill="#dbe6f0" stroke="#cbd7e2" stroke-width="0.5"/></svg>
<div class="a" style="left:498.7px;top:248.5px;width:0.7px;height:7px;background:#d9dee3"></div>
<svg class="a" style="left:502.5px;top:248.3px" width="9" height="9" viewBox="0 0 9 9"><circle cx="5.5" cy="3.3" r="2.5" fill="#cfe8f5" stroke="#4a6f99" stroke-width="0.8"/><path d="M5.5 2V4.6M4.2 3.3H6.8" stroke="#1e9e5e" stroke-width="0.9"/><path d="M3.7 5.2L0.8 8.3" stroke="#9a6a2a" stroke-width="1.3"/></svg>
<div class="t" style="left:512.97px;top:250.74px;font-size:6.6px;color:#333;transform:scaleX(0.961);">Zoom</div>
<div class="a" style="left:534.7px;top:248.5px;width:0.7px;height:7px;background:#d9dee3"></div>
<svg class="a" style="left:538.3px;top:248.5px" width="9" height="8" viewBox="0 0 9 8"><rect x="2.2" y="1" width="6.3" height="6" fill="#5a9ad8"/><rect x="3" y="1.8" width="4.7" height="2.6" fill="#f3d27a"/><path d="M0 4.8H3.5" stroke="#2a6fc0" stroke-width="0.8"/><path d="M0.2 4.8L1.5 3.8V5.8Z" fill="#2a6fc0"/></svg>
<div class="t" style="left:548.17px;top:250.74px;font-size:6.6px;color:#333;transform:scaleX(0.897);">Export</div>
<svg class="a" style="left:569.5px;top:252.0px" width="4" height="3" viewBox="0 0 4 3"><path d="M0.3 0.6H3.1L1.7 2.4Z" fill="#3a3a3a"/></svg>
<div class="a" style="left:576.3px;top:248.5px;width:0.7px;height:7px;background:#d9dee3"></div>
<svg class="a" style="left:579.5px;top:249px" width="6.5" height="6.5" viewBox="0 0 6.5 6.5"><circle cx="3.25" cy="3.25" r="3" fill="#cc2a2a"/><path d="M2 2L4.5 4.5M4.5 2L2 4.5" stroke="#fff" stroke-width="0.9"/></svg>
<div class="a" style="left:592.4px;top:248.5px;width:0.7px;height:7px;background:#d9dee3"></div>
<svg class="a" style="left:596.2px;top:248px" width="10" height="10" viewBox="0 0 10 10"><path d="M9.3 0.7L5.5 4.8" stroke="#c0392b" stroke-width="1.1"/><path d="M4.3 3.8L6.5 6L3.5 9.5L0.5 8.8L1 6.5Z" fill="#e8a84a"/><path d="M2 8L4.5 5.5M3.2 8.8L5.3 6.3" stroke="#c07a2a" stroke-width="0.5"/></svg>
<svg class="a" style="left:962.6px;top:249.2px" width="10" height="8" viewBox="0 0 10 8"><path d="M0.6 3.4H3.6M5.4 4.6H9" stroke="#2f8fde" stroke-width="1.1"/><path d="M6.8 1.3Q5 0.2 3.8 1.3Q2.8 2.6 4.8 3.8Q6.8 5.2 5.6 6.6Q4.4 7.6 2.6 6.6" fill="none" stroke="#2f8fde" stroke-width="1.2"/></svg>
<div class="t" style="left:973.17px;top:250.74px;font-size:6.6px;color:#333;transform:scaleX(0.882);">Publish</div>
<svg class="a" style="left:997.5px;top:252.0px" width="4" height="3" viewBox="0 0 4 3"><path d="M0.3 0.6H3.1L1.7 2.4Z" fill="#3a3a3a"/></svg>
<div class="a" style="left:1004.5px;top:248.5px;width:0.7px;height:7px;background:#d9dee3"></div>
<svg class="a" style="left:1008px;top:248.5px" width="9" height="9" viewBox="0 0 9 9"><path d="M7.6 3.2A3.3 3.3 0 1 1 5.8 1.3" fill="none" stroke="#bcc7d1" stroke-width="1"/><path d="M4.6 0.2L7.4 1.2L5.4 3.4Z" fill="#bcc7d1"/><path d="M4.5 3A1.6 1.6 0 1 0 6.1 4.6" fill="none" stroke="#d5dde4" stroke-width="0.7"/></svg>
<svg class="a" style="left:470px;top:258.5px" width="549" height="291.5" viewBox="470 258.5 549 291.5"><path d="M579.60 262.6V526" stroke="#f1f1f1" stroke-width="0.7"/><path d="M679.60 262.6V526" stroke="#f1f1f1" stroke-width="0.7"/><path d="M779.60 262.6V526" stroke="#f1f1f1" stroke-width="0.7"/><path d="M879.60 262.6V526" stroke="#f1f1f1" stroke-width="0.7"/><path d="M979.60 262.6V526" stroke="#f1f1f1" stroke-width="0.7"/><path d="M494.1 474.75H1015.1" stroke="#f1f1f1" stroke-width="0.7"/><path d="M494.1 396.25H1015.1" stroke="#f1f1f1" stroke-width="0.7"/><path d="M494.1 317.75H1015.1" stroke="#f1f1f1" stroke-width="0.7"/><path d="M529.60 262.6V526" stroke="#ededed" stroke-width="0.9"/><path d="M629.60 262.6V526" stroke="#ededed" stroke-width="0.9"/><path d="M729.60 262.6V526" stroke="#ededed" stroke-width="0.9"/><path d="M829.60 262.6V526" stroke="#ededed" stroke-width="0.9"/><path d="M929.60 262.6V526" stroke="#ededed" stroke-width="0.9"/><path d="M494.1 514.00H1015.1" stroke="#ededed" stroke-width="0.9"/><path d="M494.1 435.50H1015.1" stroke="#ededed" stroke-width="0.9"/><path d="M494.1 357.00H1015.1" stroke="#ededed" stroke-width="0.9"/><path d="M494.1 278.50H1015.1" stroke="#ededed" stroke-width="0.9"/><rect x="517.76" y="462.98" width="23.684" height="51.02" fill="#4682b4" stroke="#fff" stroke-width="0.55"/><rect x="541.44" y="372.70" width="23.684" height="141.30" fill="#4682b4" stroke="#fff" stroke-width="0.55"/><rect x="565.13" y="388.40" width="23.684" height="125.60" fill="#4682b4" stroke="#fff" stroke-width="0.55"/><rect x="588.81" y="298.12" width="23.684" height="215.88" fill="#4682b4" stroke="#fff" stroke-width="0.55"/><rect x="612.50" y="376.62" width="23.684" height="137.38" fill="#4682b4" stroke="#fff" stroke-width="0.55"/><rect x="636.18" y="274.58" width="23.684" height="239.42" fill="#4682b4" stroke="#fff" stroke-width="0.55"/><rect x="659.86" y="392.32" width="23.684" height="121.67" fill="#4682b4" stroke="#fff" stroke-width="0.55"/><rect x="683.55" y="408.02" width="23.684" height="105.97" fill="#4682b4" stroke="#fff" stroke-width="0.55"/><rect x="707.23" y="329.52" width="23.684" height="184.47" fill="#4682b4" stroke="#fff" stroke-width="0.55"/><rect x="730.92" y="404.10" width="23.684" height="109.90" fill="#4682b4" stroke="#fff" stroke-width="0.55"/><rect x="754.60" y="415.88" width="23.684" height="98.12" fill="#4682b4" stroke="#fff" stroke-width="0.55"/><rect x="778.28" y="372.70" width="23.684" height="141.30" fill="#4682b4" stroke="#fff" stroke-width="0.55"/><rect x="801.97" y="380.55" width="23.684" height="133.45" fill="#4682b4" stroke="#fff" stroke-width="0.55"/><rect x="825.65" y="455.12" width="23.684" height="58.88" fill="#4682b4" stroke="#fff" stroke-width="0.55"/><rect x="849.34" y="353.08" width="23.684" height="160.92" fill="#4682b4" stroke="#fff" stroke-width="0.55"/><rect x="873.02" y="443.35" width="23.684" height="70.65" fill="#4682b4" stroke="#fff" stroke-width="0.55"/><rect x="896.70" y="333.45" width="23.684" height="180.55" fill="#4682b4" stroke="#fff" stroke-width="0.55"/><rect x="920.39" y="341.30" width="23.684" height="172.70" fill="#4682b4" stroke="#fff" stroke-width="0.55"/><rect x="944.07" y="368.77" width="23.684" height="145.22" fill="#4682b4" stroke="#fff" stroke-width="0.55"/><rect x="967.76" y="498.30" width="23.684" height="15.70" fill="#4682b4" stroke="#fff" stroke-width="0.55"/><text x="490" y="516.30" text-anchor="end" font-family="Liberation Sans" font-size="6.5" fill="#4d4d4d">0</text><text x="490" y="437.80" text-anchor="end" font-family="Liberation Sans" font-size="6.5" fill="#4d4d4d">20</text><text x="490" y="359.30" text-anchor="end" font-family="Liberation Sans" font-size="6.5" fill="#4d4d4d">40</text><text x="490" y="280.80" text-anchor="end" font-family="Liberation Sans" font-size="6.5" fill="#4d4d4d">60</text><text x="529.60" y="535.8" text-anchor="middle" font-family="Liberation Sans" font-size="6.5" fill="#4d4d4d">20</text><text x="629.60" y="535.8" text-anchor="middle" font-family="Liberation Sans" font-size="6.5" fill="#4d4d4d">30</text><text x="729.60" y="535.8" text-anchor="middle" font-family="Liberation Sans" font-size="6.5" fill="#4d4d4d">40</text><text x="829.60" y="535.8" text-anchor="middle" font-family="Liberation Sans" font-size="6.5" fill="#4d4d4d">50</text><text x="929.60" y="535.8" text-anchor="middle" font-family="Liberation Sans" font-size="6.5" fill="#4d4d4d">60</text><text x="745.6" y="544.9" textLength="17.6" lengthAdjust="spacingAndGlyphs" font-family="Liberation Sans" font-size="8.6" fill="#111">edad</text><text transform="translate(480.4 403.5) rotate(-90)" textLength="19.6" lengthAdjust="spacingAndGlyphs" font-family="Liberation Sans" font-size="8.5" fill="#111">count</text></svg>
<div class="a" style="left:0px;top:550px;width:1024px;height:5px;background:#1f1f1f;border-top:0.6px solid #3a3a3a"></div>
<div class="a" style="left:16px;top:552.5px;width:8px;height:6px;border-radius:50%;background:#c0392b"></div>
<div class="a" style="left:466px;top:552.8px;width:8px;height:6px;border-radius:50%;background:#3a9ad9"></div>
<div class="a" style="left:703px;top:552.8px;width:6px;height:6px;border-radius:1px;background:#2e9e5e"></div>
<div class="a" style="left:738px;top:552px;width:22px;height:6px;border-radius:2px;background:#3b3b3b;border:0.6px solid #555"></div>
</body></html>
